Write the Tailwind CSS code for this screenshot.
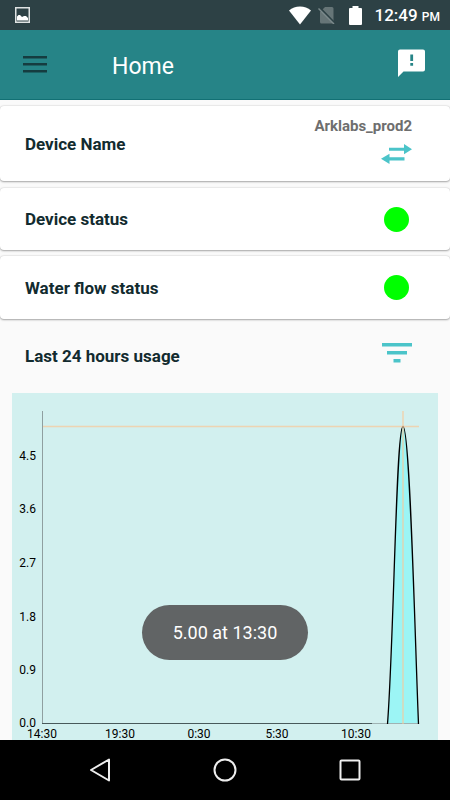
<!DOCTYPE html>
<html lang="en">
<head>
    <meta charset="UTF-8">
    <meta name="viewport" content="width=device-width, initial-scale=1.0">
    <title>Home</title>
    <script src="https://cdn.jsdelivr.net/npm/@tailwindcss/browser@4"></script>
</head>
<body class="bg-[#fafafa] min-h-screen flex flex-col font-['Roboto',sans-serif] text-[#122b2f]">
    <!-- Status bar -->
    <div class="bg-[#2d4145] h-[30px] flex items-center pl-[15px] pr-[10px] text-white">
        <svg class="w-[15px] h-[16px]" viewBox="0 0 15 16" fill="none">
            <rect x="0.75" y="0.75" width="13.5" height="14.5" stroke="#dfe3e3" stroke-width="1.5"/>
            <path d="M2 13.5V9.5l1.5-1.5h1.5l2 2 2-1h2l2 2v2.5z" fill="#fff"/>
        </svg>
        <svg class="w-[22px] h-[19px] ml-auto" viewBox="0 0 22 19" fill="#fff">
            <path d="M11 18.500L0 4.500C3 2 6.800.500 11 .500s8 1.500 11 4z"/>
        </svg>
        <svg class="w-[18px] h-[18px] ml-[7px]" viewBox="0 0 18 18" fill="none">
            <path d="M2 6l5-5h7a1.500 1.500 0 0 1 1.500 1.500V16a1.500 1.500 0 0 1-1.500 1.500H3.500A1.500 1.500 0 0 1 2 16z" fill="#667577"/>
            <path d="M1.500 1.500l16 16.500" stroke="#2d4145" stroke-width="2"/>
            <path d="M.5 2.500l15.500 15.500" stroke="#7b898b" stroke-width="1.500"/>
        </svg>
        <svg class="w-[13px] h-[19px] ml-[13px]" viewBox="0 0 13 19" fill="#fff">
            <path d="M3.500 0h6v2H12a1 1 0 0 1 1 1v15a1 1 0 0 1-1 1H1a1 1 0 0 1-1-1V3a1 1 0 0 1 1-1h2.500z"/>
        </svg>
        <p class="ml-[12px] pt-[3px] text-[17px] leading-[27px] font-medium">12:49 <span class="text-[12px]">PM</span></p>
    </div>

    <!-- App bar -->
    <header class="bg-[#268487] h-[70px] border-b border-[#127074] flex items-center pl-[23px] pr-[25px]">
        <button type="button" aria-label="Menu">
            <svg class="w-[24px] h-[18px]" viewBox="0 0 24 18" fill="#153c40">
                <path d="M0 0h24v2.500H0zM0 7h24v2.500H0zM0 14h24v2.500H0z"/>
            </svg>
        </button>
        <h1 class="ml-[65px] pt-[4px] text-[23px] leading-[28px] text-white">Home</h1>
        <button type="button" aria-label="Feedback" class="ml-auto pb-[4px]">
            <svg class="w-[27px] h-[28px]" viewBox="0 0 27 28">
                <path d="M2 .5h23a2 2 0 0 1 2 2v18a2 2 0 0 1-2 2H5.500L0 28V2.500a2 2 0 0 1 2-2z" fill="#fff"/>
                <path d="M12.300 5.500h2.800v6.500h-2.800zM12.300 14h2.800v2.800h-2.800z" fill="#268487"/>
            </svg>
        </button>
    </header>

    <main class="relative flex-1 pt-[6px]">
        <section class="bg-white rounded-[4px] shadow-[0_0_2px_rgba(0,0,0,0.2),0_1px_2px_rgba(0,0,0,0.3)] h-[75px] mb-[7px] pl-[25px] pr-[38px] flex items-center justify-between">
            <h2 class="text-[17px] leading-[24px] font-bold">Device Name</h2>
            <div class="flex flex-col items-end gap-[8px] pb-[8px]">
                <span class="text-[15px] leading-[20px] font-bold text-[#6e6e6e]">Arklabs_prod2</span>
                <button type="button" aria-label="Switch device">
                    <svg class="block w-[31px] h-[20px]" viewBox="0 0 31 20" fill="#4bc4c9">
                        <path d="M8 3.700h15V0l8 5.200-8 5.100V6.800H8zM23.500 16.400H8.500V20L0 14.800l8.500-5.100v3.500h15z"/>
                    </svg>
                </button>
            </div>
        </section>

        <section class="bg-white rounded-[4px] shadow-[0_0_2px_rgba(0,0,0,0.2),0_1px_2px_rgba(0,0,0,0.3)] h-[62px] mb-[6px] pl-[25px] pr-[41px] flex items-center justify-between">
            <h2 class="text-[17px] leading-[24px] font-bold">Device status</h2>
            <span class="w-[25px] h-[25px] rounded-full bg-[#00ff00]"></span>
        </section>

        <section class="bg-white rounded-[4px] shadow-[0_0_2px_rgba(0,0,0,0.2),0_1px_2px_rgba(0,0,0,0.3)] h-[63px] pl-[25px] pr-[41px] flex items-center justify-between">
            <h2 class="text-[17px] leading-[24px] font-bold">Water flow status</h2>
            <span class="w-[25px] h-[25px] rounded-full bg-[#00ff00]"></span>
        </section>

        <div class="h-[74px] pl-[25px] pr-[38px] flex items-center justify-between">
            <h2 class="text-[17px] leading-[24px] font-bold">Last 24 hours usage</h2>
            <button type="button" aria-label="Filter" class="pb-[6px]">
                <svg class="w-[30px] h-[20px]" viewBox="0 0 30 20" fill="#4bc4c9">
                    <path d="M0 0h30v3.500H0zM5 8h20v3.500H5zM11.500 16h7v3.500h-7z"/>
                </svg>
            </button>
        </div>

        <!-- Usage chart -->
        <div class="mx-[12px] bg-[#d2f0ef]">
            <svg class="block w-full h-auto" viewBox="0 0 426 347" role="img" aria-label="Water usage in the last 24 hours">
                <path d="M375.500 331C382 247 384 33.500 391 33.500S403 247 406.500 331z" fill="#9cf5f5"/>
                <path d="M30.500 18v313" stroke="#8f9fa0" fill="none"/>
                <path d="M360 330.500h47" stroke="#9fb3b3" fill="none"/>
                <path d="M30 330.500h330" stroke="#48595a" fill="none"/>
                <path d="M375.500 331C382 247 384 33.500 391 33.500S403 247 406.500 331" stroke="#000" stroke-width="1.300" fill="none"/>
                <path d="M31 33.500h376M391 18v313" stroke="#f8c899" stroke-opacity="0.700" stroke-width="1.500" fill="none"/>
                <g font-size="12" fill="#000" text-anchor="end">
                    <text x="24" y="67">4.5</text>
                    <text x="24" y="120">3.6</text>
                    <text x="24" y="174">2.7</text>
                    <text x="24" y="228">1.8</text>
                    <text x="24" y="281">0.9</text>
                    <text x="24" y="334">0.0</text>
                </g>
                <g font-size="12" fill="#000" text-anchor="middle">
                    <text x="30" y="345">14:30</text>
                    <text x="108" y="345">19:30</text>
                    <text x="187" y="345">0:30</text>
                    <text x="265" y="345">5:30</text>
                    <text x="344" y="345">10:30</text>
                </g>
            </svg>
        </div>

        <!-- Toast -->
        <div class="absolute inset-x-0 bottom-[80px] flex justify-center">
            <p role="status" class="bg-[#616465] text-white text-[18px] leading-[23px] px-[31px] py-[16px] rounded-full">5.00 at 13:30</p>
        </div>
    </main>

    <!-- Navigation bar -->
    <nav class="bg-black h-[60px] flex items-center justify-center gap-[102px]">
        <button type="button" aria-label="Back">
            <svg class="w-[22px] h-[26px]" viewBox="0 0 22 26" fill="none" stroke="#eee" stroke-width="2" stroke-linejoin="round">
                <path d="M2 13L20 2.500v21z"/>
            </svg>
        </button>
        <button type="button" aria-label="Home">
            <svg class="w-[24px] h-[24px]" viewBox="0 0 24 24" fill="none" stroke="#eee" stroke-width="2">
                <circle cx="12" cy="12" r="10.500"/>
            </svg>
        </button>
        <button type="button" aria-label="Recent apps">
            <svg class="w-[22px] h-[22px]" viewBox="0 0 22 22" fill="none" stroke="#eee" stroke-width="2">
                <rect x="1.500" y="1.500" width="19" height="19" rx="1"/>
            </svg>
        </button>
    </nav>
</body>
</html>
